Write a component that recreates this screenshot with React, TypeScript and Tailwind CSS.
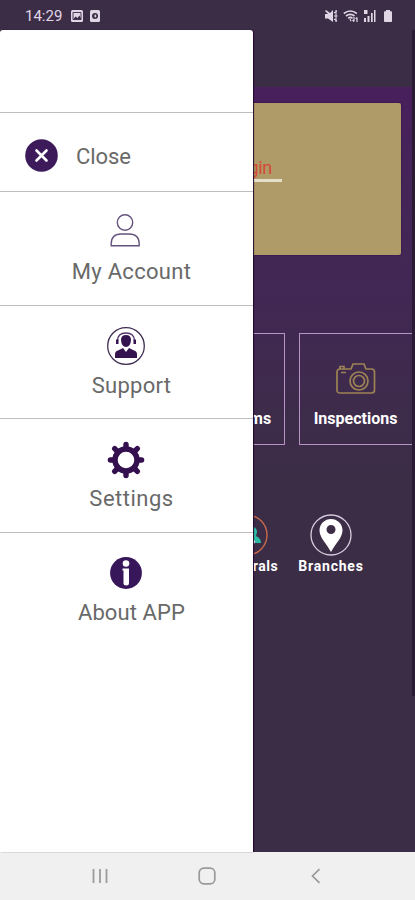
import type { ReactNode } from 'react'

interface MenuEntry {
  readonly label: string
  readonly tracking: string
  readonly iconOffset: string
  readonly icon: ReactNode
}

const MENU: readonly MenuEntry[] = [
  { label: 'My Account', tracking: 'tracking-[0.3px]', iconOffset: 'pt-0', icon: <PersonIcon /> },
  { label: 'Support', tracking: 'tracking-[0.3px]', iconOffset: 'pt-[1px]', icon: <SupportIcon /> },
  { label: 'Settings', tracking: 'tracking-[0.5px]', iconOffset: 'pt-[2px]', icon: <GearIcon /> },
  { label: 'About APP', tracking: 'tracking-[0.1px]', iconOffset: 'pt-[1px]', icon: <InfoIcon /> },
]

export default function App() {
  return (
    <main className="relative flex h-[900px] w-[415px] flex-col overflow-hidden bg-[#3c2d46] font-['Roboto',sans-serif]">
      <StatusBar />
      <div className="flex min-h-0 flex-1">
        <HomeScreen />
        <div className="h-[666px] w-[3px] shrink-0 bg-[#2b1a34]" />
      </div>
      <Drawer />
      <NavigationBar />
    </main>
  )
}

function StatusBar() {
  return (
    <header className="flex h-[30px] shrink-0 items-center justify-between pt-[2px] pr-[22px] pl-[25px] text-[#e0d6e6]">
      <div className="flex items-center">
        <span className="w-[38px] text-[15px] leading-none whitespace-nowrap">14:29</span>
        <svg className="ml-[7px]" width="14" height="14" viewBox="0 0 14 14">
          <rect x="1" y="1" width="12" height="12" rx="1.5" fill="currentColor" />
          <path d="M3 10.5l2.500-3L7.500 9l2-2.500 2 4z" fill="#3c2d46" />
          <path d="M3 3.500h8v7H3z" fill="none" stroke="#3c2d46" strokeWidth="0.9" />
        </svg>
        <svg className="ml-[5px]" width="13" height="14" viewBox="0 0 13 14">
          <rect x="1" y="1" width="10" height="12" rx="1.5" fill="currentColor" />
          <circle cx="6" cy="7" r="3" fill="#3c2d46" />
          <path d="M5 7h2.4M6.4 5.6v2.8" stroke="currentColor" strokeWidth="1" />
        </svg>
      </div>
      <div className="flex items-center gap-[4px]">
        <svg width="15" height="14" viewBox="0 0 15 14">
          <path d="M1 2l8 8V1L6 4 2 1zM1 5h3l5 5v3L4 9.500H1z" fill="currentColor" />
          <path d="M10 4l3-2M10 7h3.500M10 10l3 2M12 1v12" stroke="currentColor" strokeWidth="1.100" />
        </svg>
        <svg width="16" height="14" viewBox="0 0 16 14" fill="none" stroke="currentColor" strokeWidth="1.700">
          <path d="M.8 4.500q6.500-5 13 0M3 7q4.300-3.200 8.500 0M5.200 9.300q2.300-1.700 4.300 0" />
          <path d="M7 10l1 2.200M11 8v4.500m-1.500-1.500L11 12.500M14 13V8.500m-1.300 1.300L14 8.500" strokeWidth="1.200" />
        </svg>
        <svg width="13" height="14" viewBox="0 0 13 14" fill="currentColor">
          <path d="M1 1h3.500v4H1zM1 9h2v4H1zM4.500 7h2v6h-2zM8 4h1.700v9H8zM11 1h1.500v12H11z" />
        </svg>
        <svg className="ml-[3px]" width="10" height="14" viewBox="0 0 10 14" fill="currentColor">
          <path d="M3 1h4v1.200h1.200q.8 0 .8.800v9.200q0 .8-.8.800H1.800q-.8 0-.8-.8V3q0-.8.800-.8H3z" />
        </svg>
      </div>
    </header>
  )
}

function HomeScreen() {
  return (
    <section className="flex min-w-0 flex-1 flex-col overflow-hidden">
      <div className="h-[57px] shrink-0" />
      <div className="flex h-[390px] shrink-0 flex-col bg-gradient-to-b from-[#48205c] via-[#412853] via-55% to-[#3c2d46] pt-4">
        <div className="mr-[11px] ml-[11px] h-[152px] rounded-[2px] bg-[#ae9b67] pt-[53px] shadow-[0_0_2px_#2c0b44]">
          <div className="mr-[119px] ml-auto flex w-[140px] justify-end border-b-[3px] border-[#e5dfca] pr-[10px]">
            <span className="text-[18px] leading-[23px] tracking-[-0.3px] text-[#d34b38]">Login</span>
          </div>
        </div>
        <div className="mt-[78px] flex justify-end gap-[14px]">
          <Tile label="New Claims" />
          <Tile label="Inspections" icon={<CameraIcon />} />
        </div>
      </div>
      <div className="mt-[37px] flex justify-end pr-[39px]">
        <div className="flex w-[84px] flex-col items-center">
          <svg width="42" height="42" viewBox="0 0 42 42">
            <circle cx="21" cy="21" r="20" fill="none" stroke="#c7694b" strokeWidth="1.400" />
            <path d="M24 13q7-1 7 5l-1 4q5 2 5 7h-9z" fill="#2bbba5" />
            <path d="M7 31q0-7 10-7t12 3q0 3-3 4z" fill="#ece6ef" />
          </svg>
          <span className="mt-[2px] text-[14px] leading-[16px] font-bold tracking-[0.6px] text-white">Referrals</span>
        </div>
        <div className="flex w-[84px] flex-col items-center">
          <svg width="42" height="42" viewBox="0 0 42 42">
            <circle cx="21" cy="21" r="20" fill="none" stroke="#d9cedf" strokeWidth="1.300" />
            <path
              fillRule="evenodd"
              d="M21 5a11.500 11.500 0 0 0-11.500 11.500c0 7 7 13 11.500 21.500 4.500-8.500 11.500-14.500 11.500-21.500A11.500 11.500 0 0 0 21 5zm0 6a4.500 4.500 0 1 1 0 9 4.500 4.500 0 0 1 0-9z"
              fill="#fff"
            />
          </svg>
          <span className="mt-[2px] text-[14px] leading-[16px] font-bold tracking-[0.8px] text-white">Branches</span>
        </div>
      </div>
    </section>
  )
}

function Tile({ label, icon }: { label: string; icon?: ReactNode }) {
  return (
    <div className={`flex h-[112px] w-[113px] shrink-0 flex-col items-center border border-[#b694c4] pt-[28px] ${icon ? 'border-r-0 pr-[1px]' : ''}`}>
      <div className="h-[38px]">{icon}</div>
      <span className="mt-[9px] text-[16px] leading-[20px] font-bold whitespace-nowrap text-white">{label}</span>
    </div>
  )
}

function Drawer() {
  return (
    <aside className="absolute top-[30px] left-0 flex h-[822px] w-[253px] flex-col rounded-t-[3px] bg-white text-[#696969] shadow-[1px_0_1px_#23062f]">
      <div className="h-[83px] shrink-0 border-b border-[#bdbdbd]" />
      <div className="flex h-[79px] shrink-0 items-center border-b border-[#bdbdbd] pt-[7px] pl-[25px]">
        <svg width="33" height="33" viewBox="0 0 33 33">
          <circle cx="16.500" cy="16.500" r="16.300" fill="#3d1b5b" />
          <path d="M11.500 11.500l10 10M21.500 11.500l-10 10" stroke="#fff" strokeWidth="2.600" strokeLinecap="round" />
        </svg>
        <span className="mt-[2px] ml-[18px] text-[22px] leading-[28px] tracking-[-0.1px]">Close</span>
      </div>
      {MENU.map((entry, index) => (
        <div
          key={entry.label}
          className={`flex h-[113.7px] shrink-0 flex-col items-center pt-[20px] ${index < MENU.length - 1 ? 'border-b border-[#bdbdbd]' : ''}`}
        >
          <div className={`mr-[1px] h-[40px] ${entry.iconOffset}`}>{entry.icon}</div>
          <span className={`mt-[6px] ml-[10px] text-[22px] leading-[28px] whitespace-nowrap ${entry.tracking}`}>{entry.label}</span>
        </div>
      ))}
    </aside>
  )
}

function NavigationBar() {
  return (
    <nav className="flex h-[48px] shrink-0 items-center bg-[#f0f0f0] pl-[91px]">
      <svg width="18" height="18" viewBox="0 0 18 18" stroke="#9b9b9b" strokeWidth="1.800">
        <path d="M2.500 2v14M9 2v14M15.500 2v14" />
      </svg>
      <svg className="ml-[89px]" width="18" height="18" viewBox="0 0 18 18" fill="none" stroke="#999" strokeWidth="1.700">
        <rect x="1.200" y="1.200" width="15.600" height="15.600" rx="4.500" />
      </svg>
      <svg className="ml-[94px]" width="12" height="18" viewBox="0 0 12 18" fill="none" stroke="#999" strokeWidth="1.700">
        <path d="M9.500 2.200L2.500 9l7 6.800" />
      </svg>
    </nav>
  )
}

function PersonIcon() {
  return (
    <svg width="38" height="38" viewBox="0 0 38 38" fill="none" stroke="#65537d" strokeWidth="1.400">
      <circle cx="18" cy="10.500" r="7.700" />
      <path d="M4.200 33.800V32q0-10 10-10h8q10 0 10 10v1.800z" />
    </svg>
  )
}

function SupportIcon() {
  return (
    <svg width="38" height="38" viewBox="0 0 38 38">
      <circle cx="19" cy="19" r="18.300" fill="none" stroke="#3f2d50" strokeWidth="1.300" />
      <path d="M10.500 14q0-8 8.500-8t8.500 8" fill="none" stroke="#54356b" strokeWidth="1.300" />
      <path d="M14 13q0-5 5-5t5 5q-.5 7-5 7t-5-7z" fill="#35134f" />
      <path d="M9 12.500h2.500V17H9zM26.500 12.500H29V17h-2.500z" fill="#35134f" />
      <path d="M8 31v-4q0-3 4-4l4-2 3 4 3-4 4 2q4 1 4 4v4z" fill="#35134f" />
    </svg>
  )
}

function GearIcon() {
  return (
    <svg width="38" height="38" viewBox="-19 -19 38 38">
      <g stroke="#34104f" strokeWidth="5.400" strokeLinecap="round">
        <path d="M0-15.600V-12M0 15.600V12M-15.600 0H-12M15.600 0H12" />
        <path d="M-11.300-11.300L-9-9M11.300-11.300L9-9M-11.300 11.300L-9 9M11.300 11.300L9 9" />
      </g>
      <circle r="11" fill="none" stroke="#34104f" strokeWidth="5.400" />
    </svg>
  )
}

function InfoIcon() {
  return (
    <svg width="38" height="38" viewBox="0 0 38 38">
      <circle cx="19" cy="19" r="15.900" fill="#38165a" />
      <circle cx="19" cy="9.500" r="3.300" fill="#fff" />
      <path d="M15.500 14.500H22V29q0 2.500-2.800 2.500T16.500 29V16.500h-1z" fill="#fff" />
    </svg>
  )
}

function CameraIcon() {
  return (
    <svg width="40" height="34" viewBox="0 0 40 34" fill="none" stroke="#9d8354" strokeWidth="1.700">
      <path d="M4 7h11l2-5h11l2 5h5.500q3 0 3 3v18q0 3-3 3H4q-3 0-3-3V10q0-3 3-3z" />
      <path d="M4 7V4.500h4V7M5 10.500h5" />
      <circle cx="23" cy="19" r="9" />
      <circle cx="23" cy="19" r="5.500" />
    </svg>
  )
}
